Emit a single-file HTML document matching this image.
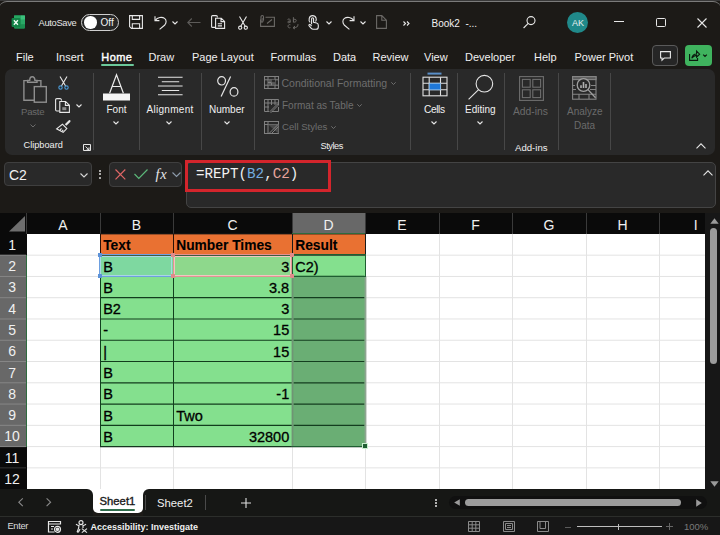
<!DOCTYPE html>
<html><head><meta charset="utf-8">
<style>
*{box-sizing:border-box;margin:0;padding:0}
html,body{width:720px;height:535px;overflow:hidden;background:#1c1a17;font-family:"Liberation Sans",sans-serif;color:#f0f0f0}
.a{position:absolute}
.t{position:absolute;white-space:pre;line-height:1}
svg{position:absolute;overflow:visible}
</style></head><body>
<!-- top border -->
<div class="a" style="left:0;top:0;width:720px;height:1.2px;background:#383838"></div>
<div class="a" style="left:-1px;top:1px;width:722px;height:8px;border-top:1.2px solid #7a7a7a;border-radius:8px 8px 0 0"></div>

<!-- TITLE BAR -->
<svg style="left:11px;top:15px" width="15" height="14" viewBox="0 0 15 14">
  <rect x="3" y="0.4" width="11" height="13.3" rx="1.2" fill="#1b8e50"/>
  <rect x="9.4" y="0.4" width="4.6" height="4.4" fill="#3cc07c"/>
  <rect x="3" y="0.4" width="6.4" height="4.4" fill="#26a862"/>
  <rect x="9.4" y="4.8" width="4.6" height="4.4" fill="#2aa866"/>
  <rect x="0.6" y="3" width="8.8" height="9" rx="1" fill="#138347"/>
  <path d="M2.9 5.3 L6.9 9.8 M6.9 5.3 L2.9 9.8" stroke="#f2fff6" stroke-width="1.3"/>
</svg>
<div class="t" style="left:38.5px;top:18.5px;font-size:9.3px;color:#e6e6e6;letter-spacing:-0.3px">AutoSave</div>
<div class="a" style="left:81px;top:14px;width:38px;height:17px;border:1.3px solid #cfcfcf;border-radius:9px;background:#262626"></div>
<div class="a" style="left:84px;top:16.3px;width:12.5px;height:12.5px;border-radius:50%;background:#fff"></div>
<div class="t" style="left:100.5px;top:17.5px;font-size:10px;color:#f2f2f2">Off</div>


<!-- save -->
<svg style="left:129px;top:15px" width="14" height="14" viewBox="0 0 14 14" fill="none" stroke="#e8e8e8" stroke-width="1.1">
  <path d="M0.6 0.6 H13.4 V13.4 H2.4 L0.6 11.6 Z"/>
  <path d="M3.3 0.6 V4.4 H10.6 V0.6"/>
  <path d="M3.3 13.4 V8.8 H10.6 V13.4"/>
</svg>
<!-- undo -->
<svg style="left:154px;top:15px" width="13" height="15" viewBox="0 0 13 15" fill="none" stroke="#e8e8e8" stroke-width="1.1">
  <path d="M1 1.2 V5.6 H5.4"/>
  <path d="M1.2 5.4 C3.5 2.2 8 1.6 10.6 3.4 C12.7 5 12.5 8 10.8 10 L5.6 14.3"/>
</svg>
<svg style="left:172px;top:20.5px" width="6" height="4" viewBox="0 0 6 4" fill="none" stroke="#e8e8e8" stroke-width="1.1"><path d="M0.5 0.5 L3 3 L5.5 0.5"/></svg>
<!-- back arrow gray -->
<svg style="left:186.5px;top:17.5px" width="14" height="9" viewBox="0 0 14 9" fill="none" stroke="#5d5b59" stroke-width="1.1"><path d="M13.5 4.5 H1 M4.8 0.5 L0.8 4.5 L4.8 8.5"/></svg>
<!-- copy -->
<svg style="left:211px;top:15px" width="15" height="14" viewBox="0 0 15 14" fill="none" stroke="#e8e8e8" stroke-width="1.1">
  <path d="M4.5 12.4 H1.6 C1 12.4 0.6 12 0.6 11.4 V1.6 C0.6 1 1 0.6 1.6 0.6 H5.2 C5.8 0.6 6.4 1 6.4 2.5"/>
  <path d="M4.6 3.2 H10.3 L13.6 6.4 V13.4 H4.6 Z M10 3.3 V6.6 H13.5"/>
  <path d="M6.8 8.8 H11 M6.8 10.9 H11"/>
</svg>
<!-- scissors -->
<svg style="left:238px;top:16px" width="10" height="14" viewBox="0 0 10 14" fill="none" stroke="#e8e8e8" stroke-width="1.1">
  <path d="M1.5 0.5 L7.2 10.2 M8.5 0.5 L2.8 10.2"/>
  <circle cx="2.2" cy="11.7" r="1.6"/><circle cx="7.8" cy="11.7" r="1.6"/>
</svg>
<!-- attachment gray -->
<svg style="left:260px;top:15px" width="15" height="12" viewBox="0 0 15 12" fill="none" stroke="#6b6966" stroke-width="1.1">
  <path d="M0.6 4.5 V11.4 H14.4 V2.2 H5.5"/>
  <path d="M3.5 5.5 V2 C3.5 0 1 0 1 2 V6 C1 7.5 3 7.5 3 6 V3"/>
  <path d="M7 8.5 L12 4.5"/>
</svg>
<!-- spelling gray -->
<svg style="left:287px;top:16.5px" width="12" height="12" viewBox="0 0 12 12" fill="none" stroke="#6b6966" stroke-width="1">
  <path d="M3.2 5.6 V3.2 C3.2 1.6 0.6 1.6 0.8 3 M3.2 4.2 C1 3.6 0.4 5.2 1 5.6 C1.6 6 3 5.6 3.2 4.8"/>
  <path d="M6.4 0.2 V5.6 M6.4 3.5 C6.4 1.8 9.2 1.8 9.2 3.5 C9.2 5.6 6.4 5.6 6.4 4"/>
  <path d="M3.4 7.8 C2 7.2 1 8.2 1 9.3 C1 10.6 2.2 11.2 3.4 10.6"/>
  <path d="M11 7.2 C11 9.8 9.5 10.8 6.2 10.8 M8 9 L6 10.8 L8 12"/>
</svg>
<!-- touch -->
<svg style="left:308px;top:15px" width="11" height="15" viewBox="0 0 11 15" fill="none" stroke="#e8e8e8" stroke-width="1.1">
  <path d="M2.2 7.4 C0.2 5.6 0.8 0.6 4.6 0.6 C8.4 0.6 9 5 7.5 6.5"/>
  <path d="M3.6 9.3 V3.7 C3.6 2.4 5.6 2.4 5.6 3.7 V7.3 L8.6 8 C9.8 8.3 10.3 9 10.3 10.3 V12 C10.3 13.3 9.4 14.3 8 14.3 H5.5 C4.2 14.3 3.6 13.8 2.8 12.8 L1 10.6 C0.5 9.9 1.6 9 2.3 9.7 L3.6 11"/>
</svg>
<svg style="left:326px;top:20.5px" width="6" height="4" viewBox="0 0 6 4" fill="none" stroke="#e8e8e8" stroke-width="1.1"><path d="M0.5 0.5 L3 3 L5.5 0.5"/></svg>
<!-- redo -->
<svg style="left:342px;top:15px" width="13" height="15" viewBox="0 0 13 15" fill="none" stroke="#e8e8e8" stroke-width="1.1">
  <path d="M12 1.2 V5.6 H7.6"/>
  <path d="M11.8 5.4 C9.5 2.2 5 1.6 2.4 3.4 C0.3 5 0.5 8 2.2 10 L7.4 14.3"/>
</svg>
<svg style="left:359.5px;top:20.5px" width="6" height="4" viewBox="0 0 6 4" fill="none" stroke="#e8e8e8" stroke-width="1.1"><path d="M0.5 0.5 L3 3 L5.5 0.5"/></svg>
<!-- doc gray -->
<svg style="left:376px;top:15px" width="11" height="14" viewBox="0 0 11 14" fill="none" stroke="#6b6966" stroke-width="1.1">
  <path d="M0.6 0.6 H5.8 L10.4 5.2 V13.4 H0.6 Z M5.8 0.6 V5.2 H10.4"/>
</svg>
<!-- >> -->
<svg style="left:402.5px;top:21px" width="7" height="5" viewBox="0 0 7 5" fill="none" stroke="#e8e8e8" stroke-width="1.1"><path d="M0.5 0.5 L2.5 2.5 L0.5 4.5 M4 0.5 L6 2.5 L4 4.5"/></svg>
<div class="t" style="left:431.5px;top:18.5px;font-size:10px;color:#f0f0f0">Book2  -...</div>
<!-- search -->
<svg style="left:523px;top:16px" width="13" height="13" viewBox="0 0 13 13" fill="none" stroke="#e8e8e8" stroke-width="1.1">
  <circle cx="8" cy="4.6" r="4"/><path d="M5.2 7.4 L0.6 12"/>
</svg>
<div class="a" style="left:567px;top:12px;width:21px;height:21px;border-radius:50%;background:#20898a"></div>
<div class="t" style="left:572px;top:18.8px;font-size:9px;color:#e8f0f0">AK</div>
<div class="a" style="left:614px;top:21px;width:9.5px;height:1.3px;background:#e8e8e8"></div>
<div class="a" style="left:656px;top:18px;width:9.5px;height:9px;border:1.2px solid #e8e8e8;border-radius:1.5px"></div>
<svg style="left:697px;top:17.5px" width="10" height="10" viewBox="0 0 10 10" fill="none" stroke="#e8e8e8" stroke-width="1.1"><path d="M0.5 0.5 L9.5 9.5 M9.5 0.5 L0.5 9.5"/></svg>

<!-- TABS -->
<div class="t" style="left:16px;top:52px;font-size:11px;color:#f0f0f0">File</div>
<div class="t" style="left:56px;top:52px;font-size:11px;color:#f0f0f0">Insert</div>
<div class="t" style="left:101.3px;top:52px;font-size:11px;color:#fff;letter-spacing:0.45px;-webkit-text-stroke:0.4px #fff">Home</div>
<div class="a" style="left:101px;top:64px;width:32.5px;height:2px;background:#6cc89a;border-radius:1px"></div>
<div class="t" style="left:148.5px;top:52px;font-size:11px;color:#f0f0f0">Draw</div>
<div class="t" style="left:192px;top:52px;font-size:11px;color:#f0f0f0">Page Layout</div>
<div class="t" style="left:270.5px;top:52px;font-size:11px;color:#f0f0f0">Formulas</div>
<div class="t" style="left:333px;top:52px;font-size:11px;color:#f0f0f0">Data</div>
<div class="t" style="left:372.5px;top:52px;font-size:11px;color:#f0f0f0">Review</div>
<div class="t" style="left:424px;top:52px;font-size:11px;color:#f0f0f0">View</div>
<div class="t" style="left:465px;top:52px;font-size:11px;color:#f0f0f0">Developer</div>
<div class="t" style="left:534px;top:52px;font-size:11px;color:#f0f0f0">Help</div>
<div class="t" style="left:574.5px;top:52px;font-size:11px;color:#f0f0f0">Power Pivot</div>
<div class="a" style="left:652px;top:45px;width:26px;height:21px;border:1px solid #5a5a5a;border-radius:4px;background:#262626"></div>
<svg style="left:660px;top:51px" width="11" height="10" viewBox="0 0 11 10" fill="none" stroke="#e8e8e8" stroke-width="1.1"><path d="M0.6 0.6 H10.4 V7 H4.2 L2 9.2 V7 H0.6 Z"/></svg>
<div class="a" style="left:685px;top:45px;width:27px;height:21px;border-radius:4px;background:#3fb35e"></div>
<svg style="left:689px;top:50px" width="20" height="11" viewBox="0 0 20 11" fill="none" stroke="#0b1a0e" stroke-width="1.1"><path d="M0.6 4 V10.4 H8.6 V8 M2.8 8.2 C3.2 5.2 5 4 7.6 4 V1.2 L10.6 4.2 L7.6 7.2 V5.4 C5.6 5.4 4 6.5 2.8 8.2 Z"/><path d="M14.2 4.6 L16 6.4 L17.8 4.6" stroke-width="1.2"/></svg>


<!-- RIBBON -->
<div class="a" style="left:5px;top:69px;width:710px;height:85.5px;background:#292929;border-radius:7px"></div>
<!-- separators -->
<div class="a" style="left:93px;top:73px;width:1px;height:77px;background:#474747"></div>
<div class="a" style="left:139px;top:73px;width:1px;height:77px;background:#474747"></div>
<div class="a" style="left:201px;top:73px;width:1px;height:77px;background:#474747"></div>
<div class="a" style="left:253.5px;top:73px;width:1px;height:77px;background:#474747"></div>
<div class="a" style="left:410px;top:73px;width:1px;height:77px;background:#474747"></div>
<div class="a" style="left:457px;top:73px;width:1px;height:77px;background:#474747"></div>
<div class="a" style="left:504px;top:73px;width:1px;height:77px;background:#474747"></div>
<div class="a" style="left:558px;top:73px;width:1px;height:77px;background:#474747"></div>
<div class="a" style="left:609.8px;top:73px;width:1px;height:77px;background:#474747"></div>

<!-- Paste -->
<svg style="left:22.5px;top:75.5px" width="25" height="27" viewBox="0 0 25 27" fill="none" stroke="#8e8e8e" stroke-width="1.4">
  <path d="M5 4.6 H0.9 V24.2 H11"/>
  <path d="M13.6 4.6 H17.9 V10.2"/>
  <path d="M4.6 6.3 H14 V4.4 H11.9 C11.9 2.2 10.9 0.8 9.3 0.8 C7.7 0.8 6.7 2.2 6.7 4.4 H4.6 Z"/>
  <rect x="11.3" y="10.6" width="12" height="15.6"/>
</svg>
<div class="t" style="left:21px;top:107.2px;font-size:9.6px;color:#6b6b6b;letter-spacing:-0.25px">Paste</div>
<svg style="left:30px;top:124px" width="6" height="4" viewBox="0 0 6 4" fill="none" stroke="#6b6b6b" stroke-width="1"><path d="M0.5 0.5 L3 3 L5.5 0.5"/></svg>
<!-- scissors blue -->
<svg style="left:58px;top:76px" width="11" height="14" viewBox="0 0 11 14" fill="none" stroke-width="1.1">
  <path d="M2 0.5 L7.6 10 M9 0.5 L3.4 10" stroke="#e6e6e6"/>
  <circle cx="2.5" cy="11.6" r="1.7" stroke="#4a9ad6"/><circle cx="8.5" cy="11.6" r="1.7" stroke="#4a9ad6"/>
</svg>
<!-- copy -->
<svg style="left:54.5px;top:98px" width="16" height="15" viewBox="0 0 16 15" fill="none" stroke="#e6e6e6" stroke-width="1.1">
  <path d="M4.8 13 H1.8 C1.1 13 0.6 12.5 0.6 11.8 V1.8 C0.6 1.1 1.1 0.6 1.8 0.6 H5.2 C6 0.6 6.5 1.2 6.6 2.6"/>
  <path d="M4.8 3.5 H10.6 L14.4 7.2 V14.4 H4.8 Z M10.4 3.6 V7.4 H14.3"/>
  <rect x="7.3" y="9.2" width="4" height="3" fill="#8c8c8c" stroke="none"/>
</svg>
<svg style="left:76px;top:104px" width="6" height="4" viewBox="0 0 6 4" fill="none" stroke="#e6e6e6" stroke-width="1.1"><path d="M0.5 0.5 L3 3 L5.5 0.5"/></svg>
<!-- format painter -->
<svg style="left:55.5px;top:120px" width="15" height="13" viewBox="0 0 15 13" fill="none" stroke="#e6e6e6" stroke-width="1.1">
  <path d="M9.2 4.6 L13 0.8 C13.5 0.3 14.3 1 13.8 1.5 L10 5.4"/>
  <path d="M6.4 4.2 L10.8 8.6 L7.2 12.4 L0.6 8.8 L6.4 4.2 Z"/>
  <path d="M3.8 10.6 L5.5 8.4 M5.8 11.6 L7.2 9.8"/>
</svg>
<div class="t" style="left:23.5px;top:141px;font-size:9.2px;color:#f0f0f0">Clipboard</div>
<svg style="left:82.5px;top:143.5px" width="8" height="7" viewBox="0 0 8 7" fill="none" stroke="#e6e6e6" stroke-width="1"><path d="M0.5 6.5 V0.5 H7.5 V6.5 Z M2.5 2.5 L6 5.8 M6 3.4 V5.8 H3.6"/></svg>

<!-- Font -->
<svg style="left:103px;top:74px" width="28" height="27" viewBox="0 0 28 27" fill="none" stroke="#ececec" stroke-width="1.2">
  <path d="M6.6 19.2 L13.5 0.8 L20.4 19.2 M9.4 12.5 H17.6"/>
  <rect x="0" y="19.5" width="27" height="7" fill="#f5f5f5" stroke="none"/>
</svg>
<div class="t" style="left:106.5px;top:104.5px;font-size:10px;color:#f0f0f0">Font</div>
<svg style="left:112.7px;top:120.5px" width="6" height="4" viewBox="0 0 6 4" fill="none" stroke="#e6e6e6" stroke-width="1.1"><path d="M0.5 0.5 L3 3 L5.5 0.5"/></svg>
<!-- Alignment -->
<svg style="left:158px;top:76px" width="25" height="20" viewBox="0 0 25 20" fill="none" stroke="#e6e6e6" stroke-width="1.1">
  <path d="M0 1.2 H24.6 M3.8 5.8 H21.2 M0 10 H24.6 M3.8 14.5 H21.2 M0 18.7 H24.6"/>
</svg>
<div class="t" style="left:146.5px;top:104.5px;font-size:10px;color:#f0f0f0;letter-spacing:0.3px">Alignment</div>
<svg style="left:166.3px;top:120.5px" width="6" height="4" viewBox="0 0 6 4" fill="none" stroke="#e6e6e6" stroke-width="1.1"><path d="M0.5 0.5 L3 3 L5.5 0.5"/></svg>
<!-- Number -->
<svg style="left:217px;top:76px" width="22" height="21" viewBox="0 0 22 21" fill="none" stroke="#e6e6e6" stroke-width="1.2">
  <ellipse cx="4.6" cy="4.8" rx="3.9" ry="4.2"/><ellipse cx="17" cy="15.9" rx="3.9" ry="4.2"/><path d="M13.6 0.4 L4.1 20.4"/>
</svg>
<div class="t" style="left:209px;top:104.5px;font-size:10px;color:#f0f0f0">Number</div>
<svg style="left:223.8px;top:120.5px" width="6" height="4" viewBox="0 0 6 4" fill="none" stroke="#e6e6e6" stroke-width="1.1"><path d="M0.5 0.5 L3 3 L5.5 0.5"/></svg>

<!-- Styles -->
<svg style="left:264px;top:76px" width="15" height="13" viewBox="0 0 15 13" fill="none" stroke="#808080" stroke-width="1">
  <rect x="0.5" y="0.5" width="14" height="12"/><path d="M0.5 3.8 H14.5 M0.5 9.2 H14.5 M4 0.5 V12.5 M11 0.5 V12.5"/>
  <rect x="4" y="3.8" width="7" height="5.4" fill="#5a5a5a" stroke="none"/><path d="M7.5 3.8 V9.2 M4 6.5 H11" stroke="#808080"/>
  <rect x="7.5" y="3.8" width="3.5" height="2.7" fill="#2a2a2a" stroke="none"/>
</svg>
<div class="t" style="left:281.5px;top:78px;font-size:10.5px;color:#6e6e6e">Conditional Formatting</div>
<svg style="left:391px;top:81.5px" width="5" height="3" viewBox="0 0 5 3" fill="none" stroke="#6e6e6e" stroke-width="1"><path d="M0.3 0.3 L2.5 2.5 L4.7 0.3"/></svg>
<svg style="left:264px;top:98.5px" width="15" height="13" viewBox="0 0 15 13" fill="none" stroke="#808080" stroke-width="1">
  <path d="M0.5 12.5 V0.5 H14.5 V6 M0.5 4 H14.5 M4 0.5 V12.5 M7.5 0.5 V6 M11 0.5 V6 M0.5 8 H5 M0.5 12.5 H5"/>
  <path d="M6 12.5 L13.5 5 L14.5 6 L7 13.5 Z M8 12.5 H14.5 V8"/>
</svg>
<div class="t" style="left:282px;top:101px;font-size:10px;color:#6e6e6e">Format as Table</div>
<svg style="left:356.5px;top:103.5px" width="5" height="3" viewBox="0 0 5 3" fill="none" stroke="#6e6e6e" stroke-width="1"><path d="M0.3 0.3 L2.5 2.5 L4.7 0.3"/></svg>
<svg style="left:264px;top:120.5px" width="15" height="13" viewBox="0 0 15 13" fill="none" stroke="#808080" stroke-width="1">
  <rect x="0.5" y="0.5" width="14" height="12"/><path d="M0.5 3.5 H14.5 M4 0.5 V12.5"/><path d="M4 3.5 H14.5 V12.5 Z" fill="#4a4a4a" stroke="none"/><path d="M5 12.5 L14 3.5 M7.5 12.5 L14.5 5.5"/>
</svg>
<div class="t" style="left:282px;top:122.3px;font-size:9.6px;color:#6e6e6e">Cell Styles</div>
<svg style="left:330.5px;top:125.5px" width="5" height="3" viewBox="0 0 5 3" fill="none" stroke="#6e6e6e" stroke-width="1"><path d="M0.3 0.3 L2.5 2.5 L4.7 0.3"/></svg>
<div class="t" style="left:320.5px;top:142.3px;font-size:9.2px;color:#f0f0f0;letter-spacing:-0.45px">Styles</div>

<!-- Cells -->
<svg style="left:421.5px;top:72px" width="26" height="25" viewBox="0 0 26 25" fill="none" stroke="#e0e0e0" stroke-width="1.1">
  <path d="M5.5 1.6 H19.5" stroke="#5a8fc8" stroke-width="2"/>
  <rect x="1" y="5.2" width="24" height="18.6"/>
  <path d="M1 11.3 H25 M1 17.8 H25 M7.2 5.2 V23.8 M18.5 5.2 V23.8"/>
  <rect x="7.2" y="11.3" width="11.3" height="6.5" fill="#1f78d8" stroke="#8fc0ee" stroke-width="0.8"/>
</svg>
<div class="t" style="left:424px;top:105px;font-size:10.2px;color:#f0f0f0;letter-spacing:-0.4px">Cells</div>
<svg style="left:430.7px;top:120.5px" width="6" height="4" viewBox="0 0 6 4" fill="none" stroke="#e6e6e6" stroke-width="1.1"><path d="M0.5 0.5 L3 3 L5.5 0.5"/></svg>
<!-- Editing -->
<svg style="left:467.5px;top:74.5px" width="26" height="25" viewBox="0 0 26 25" fill="none" stroke="#e6e6e6" stroke-width="1.1">
  <circle cx="16.4" cy="8.7" r="8.3"/><path d="M10.6 14.6 L0.6 24.4"/>
</svg>
<div class="t" style="left:465px;top:104.5px;font-size:10px;color:#f0f0f0">Editing</div>
<svg style="left:477.3px;top:120.5px" width="6" height="4" viewBox="0 0 6 4" fill="none" stroke="#e6e6e6" stroke-width="1.1"><path d="M0.5 0.5 L3 3 L5.5 0.5"/></svg>
<!-- Add-ins -->
<svg style="left:518.5px;top:76px" width="25" height="25" viewBox="0 0 25 25" fill="none" stroke="#6e6e6e" stroke-width="1.1">
  <rect x="0.6" y="0.6" width="23.8" height="23.8"/>
  <rect x="3.4" y="3.4" width="7.8" height="7.8"/><rect x="13.8" y="3.4" width="7.8" height="7.8"/>
  <rect x="3.4" y="13.8" width="7.8" height="7.8"/><rect x="13.8" y="13.8" width="7.8" height="7.8"/>
</svg>
<div class="t" style="left:513px;top:106.5px;font-size:10.3px;color:#6b6b6b">Add-ins</div>
<div class="t" style="left:515px;top:142.5px;font-size:9.6px;color:#f0f0f0">Add-ins</div>
<!-- Analyze Data -->
<svg style="left:572px;top:76px" width="25" height="24" viewBox="0 0 25 24" fill="none" stroke="#858585" stroke-width="1.1">
  <rect x="0.6" y="0.6" width="23.4" height="22.6"/>
  <rect x="0.6" y="0.6" width="23.4" height="3" fill="#5c5c5c"/>
  <path d="M0.6 9.5 H3 M19 9.5 H24 M0.6 13.5 H4 M18 13.5 H24 M0.6 18.2 H24 M7 18.2 V23 M17 18.2 V23"/>
  <circle cx="11.5" cy="9" r="6.3" fill="#292929" stroke="#a0a0a0" stroke-width="1.3"/>
  <path d="M16 13.6 L23.5 21.8" stroke="#a0a0a0" stroke-width="1.3"/>
  <path d="M9 12 V9.3 M11.5 12 V6 M14 12 V8" stroke="#b0b0b0" stroke-width="1.6"/>
</svg>
<div class="t" style="left:567px;top:107px;font-size:10px;color:#6b6b6b">Analyze</div>
<div class="t" style="left:574px;top:120.5px;font-size:10px;color:#6b6b6b">Data</div>
<svg style="left:695.8px;top:142.8px" width="10" height="6" viewBox="0 0 10 6" fill="none" stroke="#e6e6e6" stroke-width="1.1"><path d="M0.5 5.3 L5 0.8 L9.5 5.3"/></svg>


<!-- FORMULA BAR -->
<div class="a" style="left:4px;top:162px;width:88px;height:24px;background:#292929;border:1px solid #3f3f3f;border-radius:4px"></div>
<div class="t" style="left:9px;top:168px;font-size:14px;color:#f2f2f2">C2</div>
<svg style="left:80px;top:173px" width="8" height="5" viewBox="0 0 8 5" fill="none" stroke="#d8d8d8" stroke-width="1.1"><path d="M0.5 0.5 L4 4 L7.5 0.5"/></svg>
<div class="a" style="left:99.3px;top:170px;width:2px;height:2px;background:#d8d8d8;border-radius:1px"></div>
<div class="a" style="left:99.3px;top:173.3px;width:2px;height:2px;background:#d8d8d8;border-radius:1px"></div>
<div class="a" style="left:99.3px;top:176.6px;width:2px;height:2px;background:#d8d8d8;border-radius:1px"></div>
<div class="a" style="left:109px;top:162px;width:73px;height:24.5px;background:#292929;border:1px solid #3f3f3f;border-radius:4px"></div>
<svg style="left:114.5px;top:169px" width="11" height="11" viewBox="0 0 11 11" fill="none" stroke="#e06666" stroke-width="1.2"><path d="M0.5 0.5 L10.3 10.3 M10.3 0.5 L0.5 10.3"/></svg>
<svg style="left:133.5px;top:169px" width="14" height="10" viewBox="0 0 14 10" fill="none" stroke="#5cb87a" stroke-width="1.2"><path d="M0.5 5 L4.8 9.3 L13.5 0.5"/></svg>
<div class="t" style="left:155.5px;top:166.5px;font-family:'Liberation Serif',serif;font-style:italic;font-size:14.5px;color:#e6e6e6;letter-spacing:0.6px">fx</div>
<svg style="left:172px;top:172px" width="9" height="5" viewBox="0 0 9 5" fill="none" stroke="#8d9bab" stroke-width="1.1"><path d="M0.5 0.5 L4.5 4.5 L8.5 0.5"/></svg>
<div class="a" style="left:186px;top:161.5px;width:530px;height:46.5px;background:#292929;border:1px solid #444;border-radius:5px"></div>
<div class="a" style="left:185px;top:160px;width:146px;height:32px;border:3.5px solid #d3252c"></div>
<div class="t" style="left:196px;top:167.3px;font-family:'Liberation Mono',monospace;font-size:14.2px;color:#f2f2f2;letter-spacing:0px">=REPT(<span style="color:#74aee0">B2</span>,<span style="color:#e8a49c">C2</span>)</div>
<svg style="left:702.5px;top:170px" width="10" height="6" viewBox="0 0 10 6" fill="none" stroke="#e6e6e6" stroke-width="1.1"><path d="M0.5 5.3 L5 0.8 L9.5 5.3"/></svg>

<!-- GRID -->
<div class="a" style="left:0;top:212.5px;width:705px;height:276.4px;background:#fff"></div>
<div class="a" style="left:0;top:212.5px;width:705px;height:21.400000000000006px;background:#0a0a0a"></div>
<div class="a" style="left:0;top:233.9px;width:27px;height:254.99999999999997px;background:#0a0a0a"></div>
<div class="a" style="left:0;top:255.17000000000002px;width:27px;height:191.43px;background:#686868"></div>
<div class="a" style="left:292px;top:212.5px;width:73px;height:21.400000000000006px;background:#686868"></div>
<svg style="left:9px;top:216px" width="16" height="16" viewBox="0 0 16 16"><path d="M16 0 V15.6 H0 Z" fill="#6e6e6e"/></svg>
<div class="a" style="left:100px;top:212.5px;width:1px;height:21.400000000000006px;background:#3a3a3a"></div>
<div class="a" style="left:173px;top:212.5px;width:1px;height:21.400000000000006px;background:#3a3a3a"></div>
<div class="a" style="left:292px;top:212.5px;width:1px;height:21.400000000000006px;background:#3a3a3a"></div>
<div class="a" style="left:365px;top:212.5px;width:1px;height:21.400000000000006px;background:#3a3a3a"></div>
<div class="a" style="left:439px;top:212.5px;width:1px;height:21.400000000000006px;background:#3a3a3a"></div>
<div class="a" style="left:512px;top:212.5px;width:1px;height:21.400000000000006px;background:#3a3a3a"></div>
<div class="a" style="left:586px;top:212.5px;width:1px;height:21.400000000000006px;background:#3a3a3a"></div>
<div class="a" style="left:659px;top:212.5px;width:1px;height:21.400000000000006px;background:#3a3a3a"></div>
<div class="a" style="left:26px;top:212.5px;width:1px;height:21.400000000000006px;background:#3a3a3a"></div>
<div class="t" style="left:26px;top:217.5px;width:74px;text-align:center;font-size:14px;color:#f0f0f0">A</div>
<div class="t" style="left:100px;top:217.5px;width:73px;text-align:center;font-size:14px;color:#f0f0f0">B</div>
<div class="t" style="left:173px;top:217.5px;width:119px;text-align:center;font-size:14px;color:#f0f0f0">C</div>
<div class="t" style="left:292px;top:217.5px;width:73px;text-align:center;font-size:14px;color:#f0f0f0">D</div>
<div class="t" style="left:365px;top:217.5px;width:74px;text-align:center;font-size:14px;color:#f0f0f0">E</div>
<div class="t" style="left:439px;top:217.5px;width:73px;text-align:center;font-size:14px;color:#f0f0f0">F</div>
<div class="t" style="left:512px;top:217.5px;width:74px;text-align:center;font-size:14px;color:#f0f0f0">G</div>
<div class="t" style="left:586px;top:217.5px;width:73px;text-align:center;font-size:14px;color:#f0f0f0">H</div>
<div class="t" style="left:659px;top:217.5px;width:73.5px;text-align:center;font-size:14px;color:#f0f0f0">I</div>
<div class="t" style="left:0;top:237.9px;width:24.2px;text-align:center;font-size:14px;color:#f0f0f0">1</div>
<svg style="left:0;top:0" width="30" height="535" viewBox="0 0 30 535"><line x1="0" y1="255.17" x2="26" y2="255.17" stroke="#8a8a8a" stroke-opacity="0.9" stroke-width="1"/></svg>
<div class="t" style="left:0;top:259.17px;width:24.2px;text-align:center;font-size:14px;color:#f0f0f0">2</div>
<svg style="left:0;top:0" width="30" height="535" viewBox="0 0 30 535"><line x1="0" y1="276.44" x2="26" y2="276.44" stroke="#8a8a8a" stroke-opacity="0.9" stroke-width="1"/></svg>
<div class="t" style="left:0;top:280.44px;width:24.2px;text-align:center;font-size:14px;color:#f0f0f0">3</div>
<svg style="left:0;top:0" width="30" height="535" viewBox="0 0 30 535"><line x1="0" y1="297.71" x2="26" y2="297.71" stroke="#8a8a8a" stroke-opacity="0.9" stroke-width="1"/></svg>
<div class="t" style="left:0;top:301.71000000000004px;width:24.2px;text-align:center;font-size:14px;color:#f0f0f0">4</div>
<svg style="left:0;top:0" width="30" height="535" viewBox="0 0 30 535"><line x1="0" y1="318.98" x2="26" y2="318.98" stroke="#8a8a8a" stroke-opacity="0.9" stroke-width="1"/></svg>
<div class="t" style="left:0;top:322.98px;width:24.2px;text-align:center;font-size:14px;color:#f0f0f0">5</div>
<svg style="left:0;top:0" width="30" height="535" viewBox="0 0 30 535"><line x1="0" y1="340.25" x2="26" y2="340.25" stroke="#8a8a8a" stroke-opacity="0.9" stroke-width="1"/></svg>
<div class="t" style="left:0;top:344.25px;width:24.2px;text-align:center;font-size:14px;color:#f0f0f0">6</div>
<svg style="left:0;top:0" width="30" height="535" viewBox="0 0 30 535"><line x1="0" y1="361.52" x2="26" y2="361.52" stroke="#8a8a8a" stroke-opacity="0.9" stroke-width="1"/></svg>
<div class="t" style="left:0;top:365.52px;width:24.2px;text-align:center;font-size:14px;color:#f0f0f0">7</div>
<svg style="left:0;top:0" width="30" height="535" viewBox="0 0 30 535"><line x1="0" y1="382.79" x2="26" y2="382.79" stroke="#8a8a8a" stroke-opacity="0.9" stroke-width="1"/></svg>
<div class="t" style="left:0;top:386.78999999999996px;width:24.2px;text-align:center;font-size:14px;color:#f0f0f0">8</div>
<svg style="left:0;top:0" width="30" height="535" viewBox="0 0 30 535"><line x1="0" y1="404.06" x2="26" y2="404.06" stroke="#8a8a8a" stroke-opacity="0.9" stroke-width="1"/></svg>
<div class="t" style="left:0;top:408.06px;width:24.2px;text-align:center;font-size:14px;color:#f0f0f0">9</div>
<svg style="left:0;top:0" width="30" height="535" viewBox="0 0 30 535"><line x1="0" y1="425.33" x2="26" y2="425.33" stroke="#8a8a8a" stroke-opacity="0.9" stroke-width="1"/></svg>
<div class="t" style="left:0;top:429.33000000000004px;width:24.2px;text-align:center;font-size:14px;color:#f0f0f0">10</div>
<svg style="left:0;top:0" width="30" height="535" viewBox="0 0 30 535"><line x1="0" y1="446.60" x2="26" y2="446.60" stroke="#8a8a8a" stroke-opacity="0.9" stroke-width="1"/></svg>
<div class="t" style="left:0;top:450.6px;width:24.2px;text-align:center;font-size:14px;color:#f0f0f0">11</div>
<svg style="left:0;top:0" width="30" height="535" viewBox="0 0 30 535"><line x1="0" y1="467.87" x2="26" y2="467.87" stroke="#8a8a8a" stroke-opacity="0.35" stroke-width="1"/></svg>
<div class="t" style="left:0;top:471.87px;width:24.2px;text-align:center;font-size:14px;color:#f0f0f0">12</div>
<svg style="left:0;top:0" width="720" height="535" viewBox="0 0 720 535" shape-rendering="geometricPrecision"><line x1="27" y1="255.17" x2="705" y2="255.17" stroke="#e3e3e3" stroke-width="1"/><line x1="27" y1="276.44" x2="705" y2="276.44" stroke="#e3e3e3" stroke-width="1"/><line x1="27" y1="297.71" x2="705" y2="297.71" stroke="#e3e3e3" stroke-width="1"/><line x1="27" y1="318.98" x2="705" y2="318.98" stroke="#e3e3e3" stroke-width="1"/><line x1="27" y1="340.25" x2="705" y2="340.25" stroke="#e3e3e3" stroke-width="1"/><line x1="27" y1="361.52" x2="705" y2="361.52" stroke="#e3e3e3" stroke-width="1"/><line x1="27" y1="382.79" x2="705" y2="382.79" stroke="#e3e3e3" stroke-width="1"/><line x1="27" y1="404.06" x2="705" y2="404.06" stroke="#e3e3e3" stroke-width="1"/><line x1="27" y1="425.33" x2="705" y2="425.33" stroke="#e3e3e3" stroke-width="1"/><line x1="27" y1="446.60" x2="705" y2="446.60" stroke="#e3e3e3" stroke-width="1"/><line x1="27" y1="467.87" x2="705" y2="467.87" stroke="#e3e3e3" stroke-width="1"/><line x1="100.5" y1="233.9" x2="100.5" y2="489" stroke="#e3e3e3" stroke-width="1"/><line x1="173.5" y1="233.9" x2="173.5" y2="489" stroke="#e3e3e3" stroke-width="1"/><line x1="292.5" y1="233.9" x2="292.5" y2="489" stroke="#e3e3e3" stroke-width="1"/><line x1="365.5" y1="233.9" x2="365.5" y2="489" stroke="#e3e3e3" stroke-width="1"/><line x1="439.5" y1="233.9" x2="439.5" y2="489" stroke="#e3e3e3" stroke-width="1"/><line x1="512.5" y1="233.9" x2="512.5" y2="489" stroke="#e3e3e3" stroke-width="1"/><line x1="586.5" y1="233.9" x2="586.5" y2="489" stroke="#e3e3e3" stroke-width="1"/><line x1="659.5" y1="233.9" x2="659.5" y2="489" stroke="#e3e3e3" stroke-width="1"/></svg>
<div class="a" style="left:100px;top:233.9px;width:265px;height:21.27000000000001px;background:#e97132"></div>
<div class="a" style="left:100px;top:255.17000000000002px;width:265px;height:191.43px;background:#84e08e"></div>
<div class="a" style="left:292px;top:276.44px;width:73px;height:170.16000000000003px;background:#6aae74"></div>
<svg style="left:0;top:0" width="720" height="535" viewBox="0 0 720 535" shape-rendering="geometricPrecision"><line x1="100" y1="233.90" x2="366" y2="233.90" stroke="#1a1a1a" stroke-width="1"/><line x1="100" y1="255.17" x2="366" y2="255.17" stroke="#1a1a1a" stroke-width="1"/><line x1="100" y1="276.44" x2="292" y2="276.44" stroke="#123d1d" stroke-width="1.2"/><line x1="293.5" y1="276.44" x2="364.5" y2="276.44" stroke="#143d1f" stroke-width="1.2"/><line x1="100" y1="297.71" x2="292" y2="297.71" stroke="#123d1d" stroke-width="1.2"/><line x1="293.5" y1="297.71" x2="364.5" y2="297.71" stroke="#143d1f" stroke-width="1.2"/><line x1="100" y1="318.98" x2="292" y2="318.98" stroke="#123d1d" stroke-width="1.2"/><line x1="293.5" y1="318.98" x2="364.5" y2="318.98" stroke="#143d1f" stroke-width="1.2"/><line x1="100" y1="340.25" x2="292" y2="340.25" stroke="#123d1d" stroke-width="1.2"/><line x1="293.5" y1="340.25" x2="364.5" y2="340.25" stroke="#143d1f" stroke-width="1.2"/><line x1="100" y1="361.52" x2="292" y2="361.52" stroke="#123d1d" stroke-width="1.2"/><line x1="293.5" y1="361.52" x2="364.5" y2="361.52" stroke="#143d1f" stroke-width="1.2"/><line x1="100" y1="382.79" x2="292" y2="382.79" stroke="#123d1d" stroke-width="1.2"/><line x1="293.5" y1="382.79" x2="364.5" y2="382.79" stroke="#143d1f" stroke-width="1.2"/><line x1="100" y1="404.06" x2="292" y2="404.06" stroke="#123d1d" stroke-width="1.2"/><line x1="293.5" y1="404.06" x2="364.5" y2="404.06" stroke="#143d1f" stroke-width="1.2"/><line x1="100" y1="425.33" x2="292" y2="425.33" stroke="#123d1d" stroke-width="1.2"/><line x1="293.5" y1="425.33" x2="364.5" y2="425.33" stroke="#143d1f" stroke-width="1.2"/><line x1="100" y1="446.60" x2="366" y2="446.60" stroke="#16361f" stroke-width="1.1"/><line x1="100.5" y1="233.9" x2="100.5" y2="255.17" stroke="#2a1208" stroke-width="1"/><line x1="100.5" y1="255.17" x2="100.5" y2="446.60" stroke="#12401e" stroke-width="1"/><line x1="173.5" y1="233.9" x2="173.5" y2="255.17" stroke="#2a1208" stroke-width="1"/><line x1="173.5" y1="255.17" x2="173.5" y2="446.60" stroke="#12401e" stroke-width="1"/><line x1="292.5" y1="233.9" x2="292.5" y2="276.44" stroke="#1a1a1a" stroke-width="1"/><line x1="292.5" y1="276.44" x2="292.5" y2="446.60" stroke="#6f9474" stroke-width="1.8"/><line x1="365.5" y1="233.9" x2="365.5" y2="276.44" stroke="#1a1a1a" stroke-width="1"/><line x1="365.5" y1="276.44" x2="365.5" y2="446.60" stroke="#8ea591" stroke-width="1.8"/></svg>
<div class="a" style="left:100.5px;top:255.67000000000002px;width:72px;height:20.27px;background:#7ed8a0"></div>
<div class="a" style="left:173.5px;top:255.67000000000002px;width:118px;height:20.27px;background:#8ed88c"></div>
<div class="a" style="left:99px;top:254.37px;width:74.5px;height:22.87px;border:1px solid #6d9fe0"></div>
<div class="a" style="left:100.2px;top:255.57000000000002px;width:72px;height:20.47px;border:1px solid #aad6e6"></div>
<div class="a" style="left:172.7px;top:254.37px;width:119.6px;height:22.87px;border:1px solid #e39292"></div>
<div class="a" style="left:173.9px;top:255.57000000000002px;width:117.2px;height:20.47px;border:1px solid #f0c8c0"></div>
<div class="a" style="left:291.7px;top:254.17000000000002px;width:74px;height:23.07px;border:1.5px solid #1f5e32"></div>
<div class="a" style="left:292px;top:445.6px;width:73px;height:1.5px;background:#1f5e32"></div>
<div class="a" style="left:363px;top:444.1px;width:4px;height:4px;background:#1f5e32;outline:1px solid #c9f0cf"></div>
<div class="a" style="left:98px;top:253.17000000000002px;width:4px;height:4px;background:#5c92d8"></div>
<div class="a" style="left:98px;top:274.44px;width:4px;height:4px;background:#5c92d8"></div>
<div class="a" style="left:171px;top:253.17000000000002px;width:4px;height:4px;background:#e08a8a"></div>
<div class="a" style="left:171px;top:274.44px;width:4px;height:4px;background:#e08a8a"></div>
<div class="a" style="left:290px;top:253.17000000000002px;width:4px;height:4px;background:#e08a8a"></div>
<div class="a" style="left:290px;top:274.44px;width:4px;height:4px;background:#e08a8a"></div>
<div class="a" style="left:26px;top:255.17000000000002px;width:1px;height:191.43px;background:#2e6b3f"></div>
<div class="a" style="left:292px;top:232.9px;width:73px;height:1px;background:#2e6b3f"></div>
<div class="t" style="left:103.2px;top:238.5px;font-size:13.8px;font-weight:700;color:#000;-webkit-text-stroke:0.1px #000">Text</div>
<div class="t" style="left:176.2px;top:238.5px;font-size:13.8px;font-weight:700;color:#000;-webkit-text-stroke:0.1px #000">Number Times</div>
<div class="t" style="left:295.2px;top:238.5px;font-size:13.8px;font-weight:700;color:#000;-webkit-text-stroke:0.1px #000">Result</div>
<div class="t" style="left:103.2px;top:259.67px;font-size:14.5px;color:#000;-webkit-text-stroke:0.3px #000">B</div>
<div class="t" style="left:103.2px;top:280.94px;font-size:14.5px;color:#000;-webkit-text-stroke:0.3px #000">B</div>
<div class="t" style="left:103.2px;top:302.21000000000004px;font-size:14.5px;color:#000;-webkit-text-stroke:0.3px #000">B2</div>
<div class="t" style="left:103.2px;top:323.48px;font-size:14.5px;color:#000;-webkit-text-stroke:0.3px #000">-</div>
<div class="t" style="left:103.2px;top:344.75px;font-size:14.5px;color:#000;-webkit-text-stroke:0.3px #000">|</div>
<div class="t" style="left:103.2px;top:366.02px;font-size:14.5px;color:#000;-webkit-text-stroke:0.3px #000">B</div>
<div class="t" style="left:103.2px;top:387.28999999999996px;font-size:14.5px;color:#000;-webkit-text-stroke:0.3px #000">B</div>
<div class="t" style="left:103.2px;top:408.56px;font-size:14.5px;color:#000;-webkit-text-stroke:0.3px #000">B</div>
<div class="t" style="left:103.2px;top:429.83000000000004px;font-size:14.5px;color:#000;-webkit-text-stroke:0.3px #000">B</div>
<div class="t" style="right:430.8px;top:259.67px;font-size:14.5px;color:#000;-webkit-text-stroke:0.3px #000">3</div>
<div class="t" style="right:430.8px;top:280.94px;font-size:14.5px;color:#000;-webkit-text-stroke:0.3px #000">3.8</div>
<div class="t" style="right:430.8px;top:302.21000000000004px;font-size:14.5px;color:#000;-webkit-text-stroke:0.3px #000">3</div>
<div class="t" style="right:430.8px;top:323.48px;font-size:14.5px;color:#000;-webkit-text-stroke:0.3px #000">15</div>
<div class="t" style="right:430.8px;top:344.75px;font-size:14.5px;color:#000;-webkit-text-stroke:0.3px #000">15</div>
<div class="t" style="right:430.8px;top:387.28999999999996px;font-size:14.5px;color:#000;-webkit-text-stroke:0.3px #000">-1</div>
<div class="t" style="right:430.8px;top:429.83000000000004px;font-size:14.5px;color:#000;-webkit-text-stroke:0.3px #000">32800</div>
<div class="t" style="left:176.2px;top:408.56px;font-size:14.5px;color:#000;-webkit-text-stroke:0.3px #000">Two</div>
<div class="t" style="left:295.2px;top:259.67px;font-size:14.5px;color:#000;-webkit-text-stroke:0.3px #000">C2)</div>
<!-- /GRID -->

<!-- BOTTOM -->
<div class="a" style="left:705px;top:212.5px;width:15px;height:276.5px;background:#171717"></div>
<svg style="left:709.5px;top:217.5px" width="9" height="6" viewBox="0 0 9 6"><path d="M4.5 0.3 L8.7 5.8 H0.3 Z" fill="#9a9a9a"/></svg>
<div class="a" style="left:710px;top:228px;width:7px;height:136px;background:#9c9c9c;border-radius:3.5px"></div>
<svg style="left:709.5px;top:481px" width="9" height="6" viewBox="0 0 9 6"><path d="M4.5 5.7 L8.7 0.2 H0.3 Z" fill="#9a9a9a"/></svg>

<div class="a" style="left:86px;top:489px;width:64px;height:8px;background:#fff"></div>
<div class="a" style="left:0;top:489px;width:92.5px;height:27.5px;background:#161715;border-top-right-radius:6px"></div>
<div class="a" style="left:143px;top:489px;width:577px;height:27.5px;background:#161715;border-top-left-radius:6px"></div>
<div class="a" style="left:0;top:516px;width:720px;height:1px;background:#2c2e2b"></div>
<div class="a" style="left:0;top:517px;width:720px;height:18px;background:#171717"></div>
<svg style="left:18px;top:498px" width="6" height="9" viewBox="0 0 6 9" fill="none" stroke="#8a8a8a" stroke-width="1.1"><path d="M4.8 0.3 L0.8 4.2 L4.8 8.2"/></svg>
<svg style="left:45.5px;top:498px" width="6" height="9" viewBox="0 0 6 9" fill="none" stroke="#8a8a8a" stroke-width="1.1"><path d="M0.6 0.3 L4.6 4.2 L0.6 8.2"/></svg>
<div class="a" style="left:92.5px;top:489px;width:50.5px;height:24.3px;background:#fff;border-radius:0 0 5px 5px"></div>
<div class="t" style="left:99.5px;top:495.6px;font-size:11.3px;color:#1a1a1a;-webkit-text-stroke:0.35px #1a1a1a">Sheet1</div>
<div class="a" style="left:100px;top:509px;width:35px;height:2px;background:#2f6e4c;border-radius:1px"></div>
<div class="a" style="left:145px;top:495px;width:1px;height:15px;background:#4a4a4a"></div>
<div class="t" style="left:157px;top:498px;font-size:11.3px;color:#f0f0f0">Sheet2</div>
<div class="a" style="left:204.5px;top:495px;width:1px;height:15px;background:#4a4a4a"></div>
<svg style="left:240.5px;top:497.5px" width="10" height="10" viewBox="0 0 10 10" fill="none" stroke="#e0e0e0" stroke-width="1.1"><path d="M5 0 V10 M0 5 H10"/></svg>
<div class="a" style="left:434.5px;top:498.7px;width:2.2px;height:2.2px;background:#e6e6e6;border-radius:1.1px"></div>
<div class="a" style="left:434.5px;top:502px;width:2.2px;height:2.2px;background:#e6e6e6;border-radius:1.1px"></div>
<div class="a" style="left:434.5px;top:505.3px;width:2.2px;height:2.2px;background:#e6e6e6;border-radius:1.1px"></div>
<div class="a" style="left:449px;top:496px;width:258px;height:13px;background:#101010;border-radius:6.5px"></div>
<svg style="left:453.8px;top:498.8px" width="6" height="7" viewBox="0 0 6 7"><path d="M0.2 3.5 L5.8 0.2 V6.8 Z" fill="#9a9a9a"/></svg>
<div class="a" style="left:464.5px;top:499px;width:216px;height:7px;background:#9c9c9c;border-radius:3.5px"></div>
<svg style="left:696px;top:498.5px" width="6" height="8" viewBox="0 0 6 8"><path d="M5.8 4 L0.2 0.2 V7.8 Z" fill="#9a9a9a"/></svg>

<div class="t" style="left:7.5px;top:522.3px;font-size:9.3px;color:#dcdcdc;letter-spacing:-0.35px">Enter</div>
<svg style="left:48px;top:520.5px" width="13" height="12" viewBox="0 0 13 12" fill="none" stroke="#e6e6e6" stroke-width="1.2"><path d="M0.5 0.5 H12.5 V3 H0.5 Z M0.5 3 V11 H6.5 M3 5.5 H6 M3 8 H5"/><circle cx="9.5" cy="8.3" r="3"/><circle cx="9.5" cy="8.3" r="1.2" fill="#d8d8d8"/></svg>
<svg style="left:74.5px;top:520.3px" width="13" height="13" viewBox="0 0 13 13" fill="none" stroke="#e6e6e6" stroke-width="1.15"><circle cx="6" cy="2.6" r="2"/><path d="M1 4.2 C2 5.2 3.2 5.6 4 5.4 C4 7.5 3.3 9 2.2 11.8 C2.6 12.5 3.3 12.4 3.6 11.8 L5 9 M11 4.2 C10 5.2 8.8 5.6 8 5.4 V8 M6.8 8.6 L12 12.6 M12 8.6 L6.8 12.6"/></svg>
<div class="t" style="left:90.5px;top:522.6px;font-size:9px;font-weight:700;color:#f0f0f0">Accessibility: Investigate</div>

<svg style="left:468px;top:520.5px" width="12" height="11" viewBox="0 0 12 11" fill="none" stroke="#8a8a8a" stroke-width="1"><path d="M0.5 0.5 H11.5 V10.5 H0.5 Z M0.5 3.8 H11.5 M0.5 7.2 H11.5 M4.2 0.5 V10.5 M7.8 0.5 V10.5"/></svg>
<svg style="left:502.5px;top:520.5px" width="12" height="11" viewBox="0 0 12 11" fill="none" stroke="#8a8a8a" stroke-width="1"><path d="M0.5 0.5 H11.5 V10.5 H0.5 Z M2.5 2.5 H9.5 V8.5 H2.5 Z M4 4.5 H8 M4 6.5 H8"/></svg>
<svg style="left:537px;top:520.5px" width="12" height="11" viewBox="0 0 12 11" fill="none" stroke="#8a8a8a" stroke-width="1"><path d="M0.5 0.5 H11.5 V10.5 H0.5 Z M3 0.5 V7.5 H8.5 V0.5"/></svg>
<div class="a" style="left:565px;top:526.5px;width:6px;height:1px;background:#5a5a5a"></div>
<div class="a" style="left:576.5px;top:526.3px;width:85px;height:1.2px;background:#bdbdbd"></div>
<div class="a" style="left:618px;top:523.5px;width:1.3px;height:6px;background:#bdbdbd"></div>
<svg style="left:666px;top:523px" width="7" height="7" viewBox="0 0 7 7" fill="none" stroke="#666" stroke-width="1"><path d="M3.5 0 V7 M0 3.5 H7"/></svg>
<div class="t" style="left:684px;top:522px;font-size:9.5px;color:#7a7a7a">100%</div>

</body></html>
